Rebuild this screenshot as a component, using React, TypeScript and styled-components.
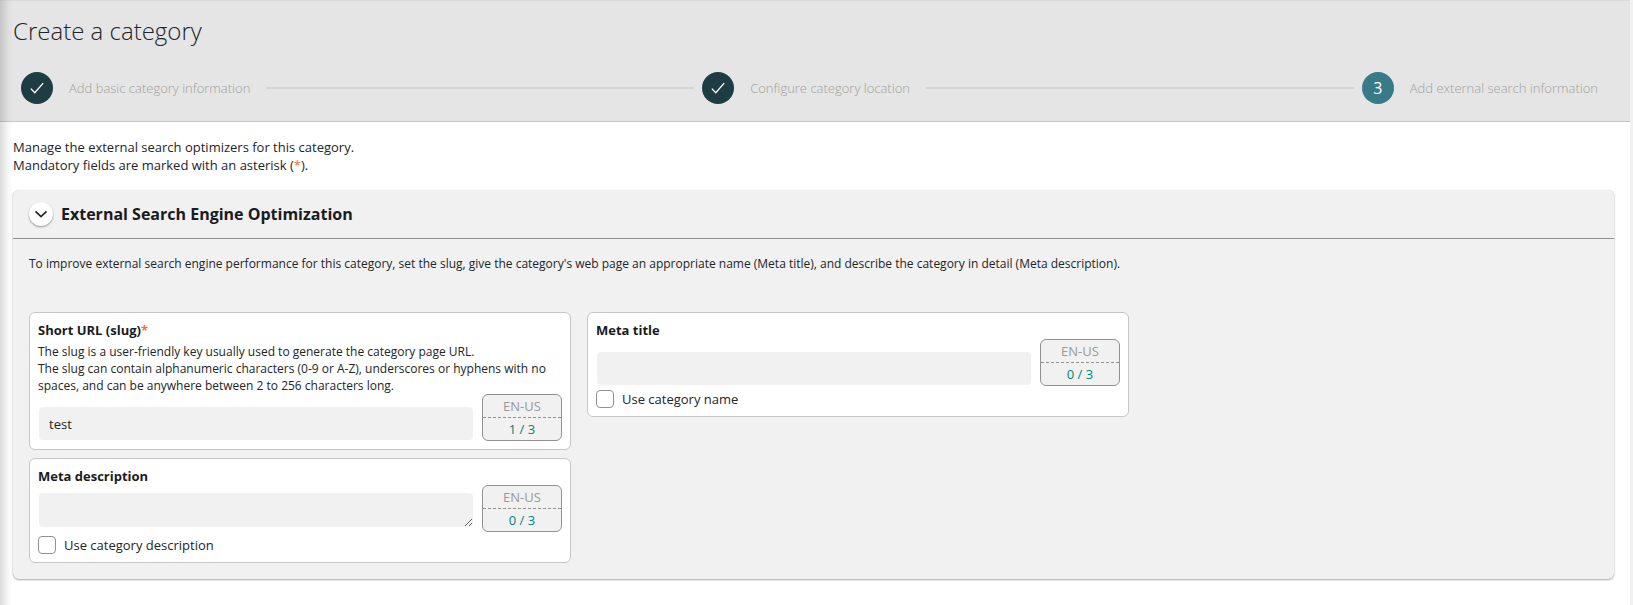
import React from "react";
import styled, { createGlobalStyle } from "styled-components";

const GlobalStyle = createGlobalStyle`
  *, *::before, *::after { box-sizing: border-box; }
  html, body { margin: 0; padding: 0; }
  body {
    background: #f1f1f1;
    color: #212529;
    font: 400 13px/18px "Open Sans", sans-serif;
    overflow: hidden;
  }
`;

const Page = styled.div`
  position: relative;
  width: 1630px;
  height: 605px;
  background: #fff;
`;

const EdgeShadow = styled.div`
  position: absolute;
  top: 0;
  bottom: 0;
  left: 0;
  width: 12px;
  background: linear-gradient(
    to right,
    rgba(0, 0, 0, 0.14),
    rgba(0, 0, 0, 0.1) 25%,
    rgba(0, 0, 0, 0.05) 55%,
    rgba(0, 0, 0, 0.02) 80%,
    rgba(0, 0, 0, 0.01)
  );
  pointer-events: none;
`;

const Header = styled.header`
  height: 122px;
  padding: 13px 0 0 13px;
  background: #e5e5e5;
  border-top: 1px solid #dadada;
  border-bottom: 1px solid #c6c6c6;
`;

const Title = styled.h1`
  margin: 0 0 25px;
  font-size: 24px;
  line-height: 33px;
  font-weight: 300;
`;

const Steps = styled.div`
  display: flex;
  align-items: center;
  padding: 0 32px 0 8px;
`;

const StepCircle = styled.span<{ $current?: boolean }>`
  flex: none;
  display: flex;
  align-items: center;
  justify-content: center;
  width: 32px;
  height: 32px;
  border-radius: 50%;
  background: ${(p) => (p.$current ? "#377b89" : "#1e3c44")};
  color: #fff;
  font-size: 16px;
`;

const StepLabel = styled.span`
  flex: none;
  margin-left: 16px;
  color: #a0a0a0;
  font-weight: 300;
`;

const StepLine = styled.span`
  flex: 1;
  height: 2px;
  margin: 0 8px 0 16px;
  background: #d6d6d6;
`;

const Intro = styled.p`
  margin: 0;
  padding: 16px 13px;
`;

const Asterisk = styled.span`
  color: #ff6d33;
`;

const Panel = styled.section`
  width: 1601px;
  height: 389px;
  margin-left: 13px;
  border-radius: 6px;
  background: #f1f1f1;
  box-shadow: 0 1px 2px rgba(0, 0, 0, 0.35), 0 0 1px rgba(0, 0, 0, 0.15);
`;

const PanelHeader = styled.div`
  display: flex;
  align-items: center;
  gap: 8px;
  height: 49px;
  padding-left: 16px;
  border-bottom: 1px solid #919191;
`;

const Toggle = styled.button`
  display: flex;
  align-items: center;
  justify-content: center;
  width: 24px;
  height: 24px;
  padding: 0;
  border: 0;
  border-radius: 50%;
  background: #fff;
  box-shadow: 0 1px 2px rgba(0, 0, 0, 0.4);
`;

const PanelTitle = styled.h2`
  margin: 0;
  font-size: 16px;
  line-height: 24px;
  font-weight: 700;
  color: #191b1e;
`;

const PanelBody = styled.div`
  padding: 16px;
`;

const Description = styled.p`
  margin: 0 0 40px;
  font-size: 12px;
  line-height: 17px;
`;

const Columns = styled.div`
  display: flex;
  align-items: flex-start;
  gap: 16px;
`;

const Column = styled.div`
  display: flex;
  flex-direction: column;
  gap: 8px;
  width: 542px;
`;

const Card = styled.div`
  padding: 8px;
  border: 1px solid #c6c6c6;
  border-radius: 6px;
  background: #fff;
`;

const FieldLabel = styled.div`
  font-weight: 700;
  color: #191b1e;
`;

const Help = styled.p`
  margin: 4px 0 0;
  font-size: 12px;
  line-height: 17px;
`;

const FieldRow = styled.div`
  display: flex;
  align-items: flex-end;
  gap: 9px;
  padding-left: 1px;
`;

const Input = styled.input`
  flex: 1;
  min-width: 0;
  height: 33px;
  margin: 0 0 1px;
  padding: 0 10px;
  border: 0;
  border-radius: 4px;
  background: #f1f1f1;
  color: #212529;
  font: inherit;
`;

const TextArea = styled.textarea`
  flex: 1;
  min-width: 0;
  height: 34px;
  margin: 0 0 5px;
  padding: 8px 10px;
  border: 0;
  border-radius: 4px;
  background: #f1f1f1;
  font: inherit;
  resize: vertical;
  overflow: hidden;
`;

const LocaleBox = styled.div`
  width: 80px;
  border: 1px solid #919191;
  border-radius: 6px;
  background: #f1f1f1;
  text-align: center;
  line-height: 22px;
`;

const LocaleName = styled.div`
  border-bottom: 1px dashed #919191;
  color: #999;
`;

const LocaleCount = styled.div`
  color: #00857a;
`;

const CheckRow = styled.label`
  display: flex;
  align-items: center;
  gap: 8px;
  margin-top: 4px;
`;

const CheckBox = styled.input`
  appearance: none;
  width: 18px;
  height: 18px;
  margin: 0;
  border: 1px solid #919191;
  border-radius: 4px;
  background: #fff;
`;

const CheckIcon = () => (
  <svg width="14" height="14" viewBox="0 0 14 14" fill="none" stroke="#fff" strokeWidth="1.3">
    <path d="M0.8 7.6 4.8 11.8 13.2 2.1" />
  </svg>
);

const ChevronIcon = () => (
  <svg width="14" height="14" viewBox="0 0 14 14" fill="none" stroke="#212529" strokeWidth="1.7">
    <path d="M1.5 4.4 7 9.6 12.5 4.4" />
  </svg>
);

const Locale = ({ count }: { count: number }) => (
  <LocaleBox>
    <LocaleName>EN-US</LocaleName>
    <LocaleCount>{count} / 3</LocaleCount>
  </LocaleBox>
);

export default function App() {
  return (
    <>
      <GlobalStyle />
      <Page>
        <Header>
          <Title>Create a category</Title>
          <Steps>
            <StepCircle><CheckIcon /></StepCircle>
            <StepLabel>Add basic category information</StepLabel>
            <StepLine />
            <StepCircle><CheckIcon /></StepCircle>
            <StepLabel>Configure category location</StepLabel>
            <StepLine />
            <StepCircle $current>3</StepCircle>
            <StepLabel>Add external search information</StepLabel>
          </Steps>
        </Header>
        <Intro>
          Manage the external search optimizers for this category.
          <br />
          Mandatory fields are marked with an asterisk (<Asterisk>*</Asterisk>).
        </Intro>
        <Panel>
          <PanelHeader>
            <Toggle aria-label="Collapse section"><ChevronIcon /></Toggle>
            <PanelTitle>External Search Engine Optimization</PanelTitle>
          </PanelHeader>
          <PanelBody>
            <Description>
              To improve external search engine performance for this category, set the slug, give the category's web page
              an appropriate name (Meta title), and describe the category in detail (Meta description).
            </Description>
            <Columns>
              <Column>
                <Card>
                  <FieldLabel>Short URL (slug)<Asterisk>*</Asterisk></FieldLabel>
                  <Help>
                    The slug is a user-friendly key usually used to generate the category page URL.
                    <br />
                    The slug can contain alphanumeric characters (0-9 or A-Z), underscores or hyphens with no spaces,
                    and can be anywhere between 2 to 256 characters long.
                  </Help>
                  <FieldRow>
                    <Input defaultValue="test" />
                    <Locale count={1} />
                  </FieldRow>
                </Card>
                <Card>
                  <FieldLabel>Meta description</FieldLabel>
                  <FieldRow>
                    <TextArea />
                    <Locale count={0} />
                  </FieldRow>
                  <CheckRow><CheckBox type="checkbox" />Use category description</CheckRow>
                </Card>
              </Column>
              <Column>
                <Card>
                  <FieldLabel>Meta title</FieldLabel>
                  <FieldRow>
                    <Input />
                    <Locale count={0} />
                  </FieldRow>
                  <CheckRow><CheckBox type="checkbox" />Use category name</CheckRow>
                </Card>
              </Column>
            </Columns>
          </PanelBody>
        </Panel>
        <EdgeShadow />
      </Page>
    </>
  );
}
